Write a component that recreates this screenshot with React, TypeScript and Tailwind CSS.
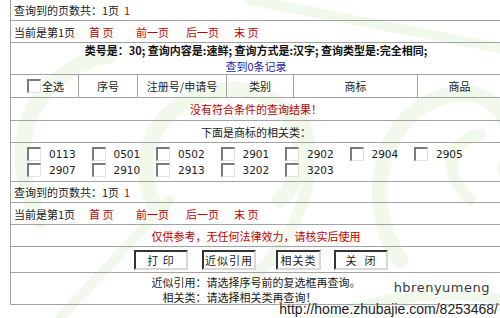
import React from "react";

const cjk = { fontFamily: '"Noto Sans CJK SC", "Noto Sans", sans-serif' };

function Box() {
  return (
    <span className="inline-block w-[14px] h-[14px] bg-white border-t-2 border-l-2 border-t-[#7b7b7b] border-l-[#7b7b7b] border-b border-r border-b-[#e2e2e2] border-r-[#e2e2e2] shrink-0" />
  );
}

function Btn({ label, w }: { label: string; w: string }) {
  return (
    <span
      className={`${w} inline-flex items-center justify-center h-[20px] bg-white border-t-2 border-l-2 border-t-[#333] border-l-[#333] border-b-2 border-r-2 border-b-[#d8d8d8] border-r-[#d8d8d8] text-[11px] text-[#222] tracking-[1px] whitespace-pre`}
    >
      {label}
    </span>
  );
}

function PageInfo() {
  return (
    <div className="h-[21px] border-b border-[#a3a3a3] flex items-center pl-[3px]">
      查询到的页数共：1页&nbsp;&nbsp;<span className="text-[#c00000]">1</span>
    </div>
  );
}

function PageNav() {
  return (
    <div className="h-[22px] border-b border-[#a3a3a3] flex items-center pl-[3px]">
      <span className="w-[75px]">当前是第1页</span>
      <span className="text-[#c00000] w-[47px]">首&nbsp;页</span>
      <span className="text-[#c00000] w-[50px]">前一页</span>
      <span className="text-[#c00000] w-[48px]">后一页</span>
      <span className="text-[#c00000]">末&nbsp;页</span>
    </div>
  );
}

const codes = ["0113", "0501", "0502", "2901", "2902", "2904", "2905", "2907", "2910", "2913", "3202", "3203"];

function Watermark() {
  return (
    <svg className="absolute inset-0 pointer-events-none" width="500" height="318" viewBox="0 0 500 318">
      <g fill="none" stroke="#f1f9ec" strokeWidth="16" strokeLinecap="round">
        <path d="M40 220 C 0 150, 30 70, 110 55" />
        <path d="M250 0 L 500 48" strokeWidth="10" />
        <path d="M160 215 C 120 150, 170 85, 240 90 C 300 95, 320 160, 280 200" />
        <path d="M230 300 C 290 250, 330 180, 300 110" strokeWidth="12" />
        <path d="M400 260 C 360 200, 380 110, 450 95 C 500 85, 520 130, 505 170" />
        <path d="M470 200 C 440 170, 450 140, 480 135" strokeWidth="12" />
        <path d="M60 318 L 170 200" strokeWidth="10" />
        <path d="M330 318 C 400 290, 460 290, 500 300" strokeWidth="12" />
      </g>
    </svg>
  );
}

export default function App() {
  return (
    <div className="relative w-[500px] h-[318px] overflow-hidden bg-white text-[11px] leading-[14px] text-[#1a1a1a]" style={cjk}>
      <Watermark />
      <div className="relative ml-[10px] w-[492px] border-l border-r border-b border-[#a3a3a3]">
        <PageInfo />
        <PageNav />

        <div className="h-[32px] border-b border-[#a3a3a3] flex flex-col items-center justify-center gap-[1px] leading-[15px]">
          <div className="font-bold text-[#111]">类号是：30; 查询内容是:速鲜; 查询方式是:汉字; 查询类型是:完全相同;</div>
          <div className="text-[#1c1ca8]">查到0条记录</div>
        </div>

        <div className="h-[23px] border-b border-[#a3a3a3] grid grid-cols-[68px_59px_89px_67px_124px_1fr] text-[#222]">
          <div className="border-r border-[#a3a3a3] flex items-center pl-[16px] gap-[1px]">
            <Box />
            <span>全选</span>
          </div>
          <div className="border-r border-[#a3a3a3] flex items-center justify-center">序号</div>
          <div className="border-r border-[#a3a3a3] flex items-center justify-center">注册号/申请号</div>
          <div className="border-r border-[#a3a3a3] flex items-center justify-center">类别</div>
          <div className="border-r border-[#a3a3a3] flex items-center justify-center">商标</div>
          <div className="flex items-center justify-center">商品</div>
        </div>

        <div className="h-[23px] border-b border-[#a3a3a3] flex items-center justify-center text-[#c00000]">
          没有符合条件的查询结果！
        </div>

        <div className="h-[22px] border-b border-[#a3a3a3] flex items-center justify-center">
          下面是商标的相关类：
        </div>

        <div className="h-[39px] border-b border-[#a3a3a3] pl-[16px] pt-[3px]">
          <div className="grid grid-cols-[repeat(7,64.5px)] gap-y-[1px]">
            {codes.map((c) => (
              <div key={c} className="flex items-center h-[15px]">
                <Box />
                <span className="ml-[8px] text-[10.5px] text-[#222]" style={{ fontFamily: '"DejaVu Sans", sans-serif' }}>
                  {c}
                </span>
              </div>
            ))}
          </div>
        </div>

        <PageInfo />
        <PageNav />

        <div className="h-[22px] border-b border-[#a3a3a3] flex items-center justify-center text-[#c00000]">
          仅供参考，无任何法律效力，请核实后使用
        </div>

        <div className="h-[26px] border-b border-[#a3a3a3] flex items-center pl-[123px]">
          <Btn label="打 印" w="w-[54px]" />
          <span className="w-[14px]" />
          <Btn label="近似引用" w="w-[54px]" />
          <span className="w-[20px]" />
          <Btn label="相关类" w="w-[45px]" />
          <span className="w-[13px]" />
          <Btn label="关  闭" w="w-[54px]" />
        </div>

        <div className="h-[31px] flex justify-center pt-[2px]">
          <div className="grid grid-cols-[auto_auto] leading-[14px]">
            <span className="text-right h-[14px]">近似引用：</span>
            <span className="h-[14px]">请选择序号前的复选框再查询。</span>
            <span className="text-right h-[14px]">相关类：</span>
            <span className="h-[14px]">请选择相关类再查询！</span>
          </div>
        </div>
      </div>

      <div
        className="absolute right-[10px] top-[281px] text-[13px] text-[#3a3a3a] tracking-[0.5px]"
        style={{ fontFamily: '"DejaVu Sans", sans-serif', textShadow: "0 0 2px #fff, 0 0 2px #fff" }}
      >
        hbrenyumeng
      </div>
      <div
        className="absolute right-[2px] top-[301px] text-[14px] leading-[16px] text-[#222]"
        style={{ fontFamily: '"Liberation Sans", sans-serif', textShadow: "0 0 2px #fff, 0 0 2px #fff" }}
      >
        http://home.zhubajie.com/8253468/
      </div>
    </div>
  );
}
